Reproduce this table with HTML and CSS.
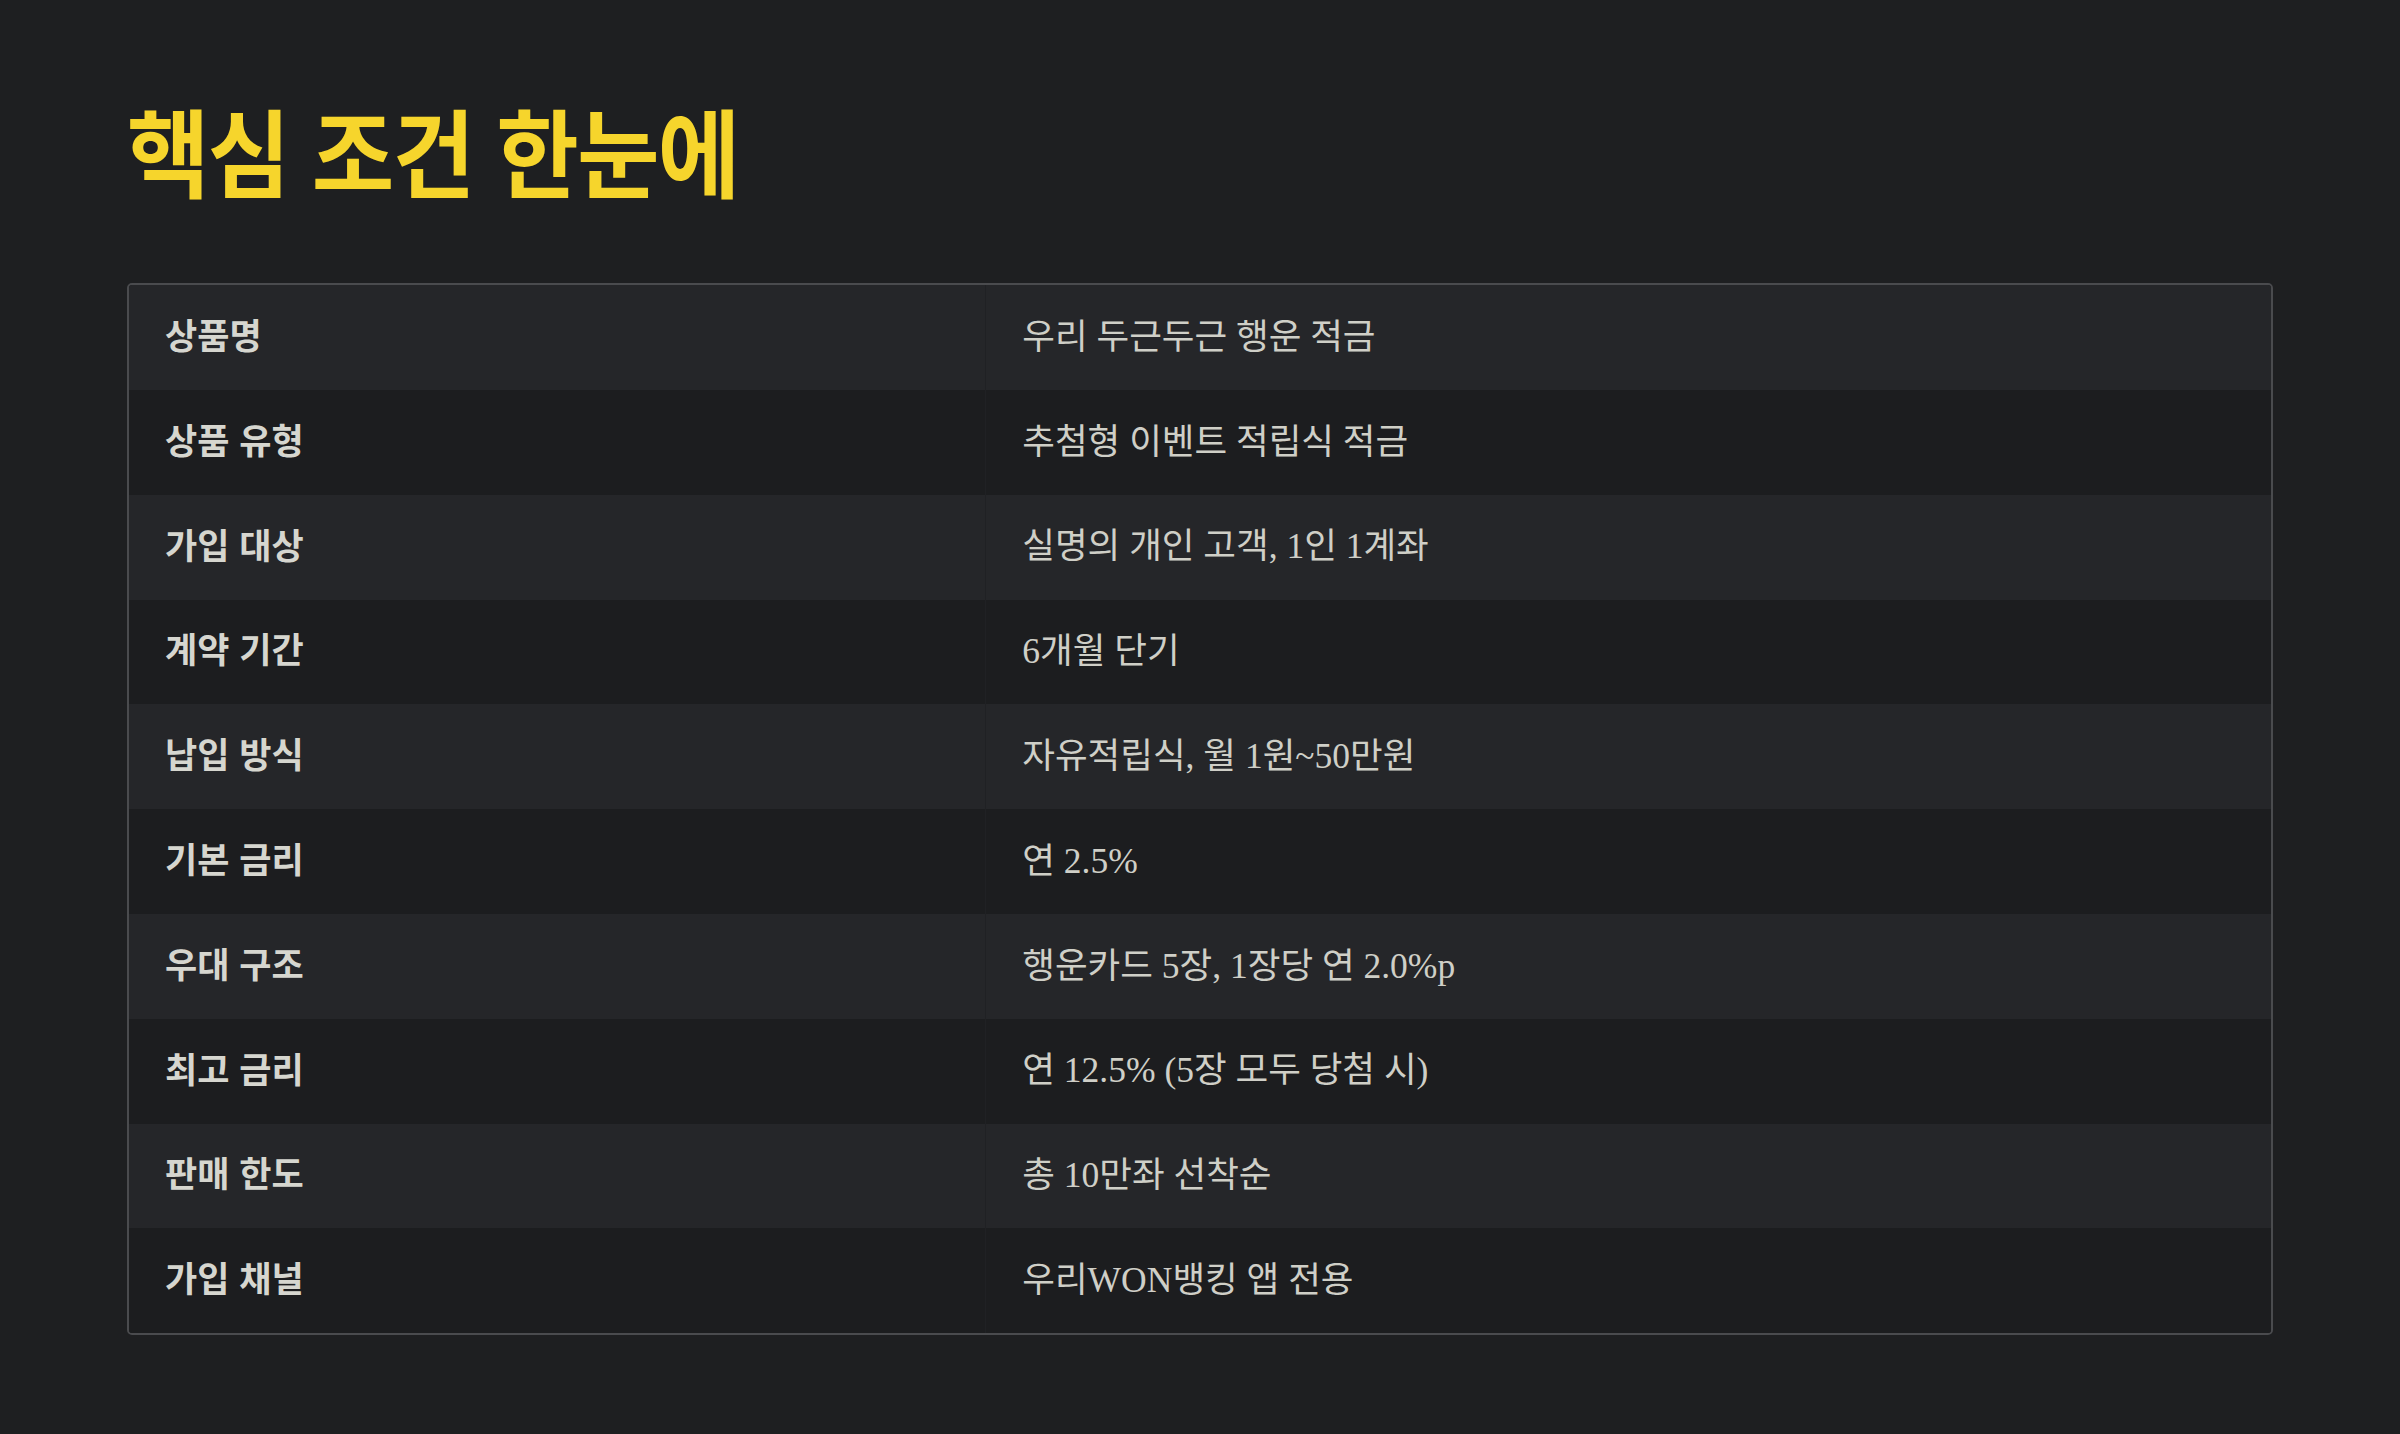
FILE: index.html
```html
<!DOCTYPE html>
<html lang="ko">
<head>
<meta charset="utf-8">
<title>핵심 조건 한눈에</title>
<link rel="stylesheet" href="styles.css">
</head>
<body>
<main class="page">
  <h1 class="title"><span class="title-text">핵심 조건 한눈에</span></h1>
  <div class="table-wrap">
    <table class="terms">
      <tbody>
        <tr><th>상품명</th><td>우리 두근두근 행운 적금</td></tr>
        <tr><th>상품 유형</th><td>추첨형 이벤트 적립식 적금</td></tr>
        <tr><th>가입 대상</th><td>실명의 개인 고객, 1인 1계좌</td></tr>
        <tr><th>계약 기간</th><td>6개월 단기</td></tr>
        <tr><th>납입 방식</th><td>자유적립식, 월 1원~50만원</td></tr>
        <tr><th>기본 금리</th><td>연 2.5%</td></tr>
        <tr><th>우대 구조</th><td>행운카드 5장, 1장당 연 2.0%p</td></tr>
        <tr><th>최고 금리</th><td>연 12.5% (5장 모두 당첨 시)</td></tr>
        <tr><th>판매 한도</th><td>총 10만좌 선착순</td></tr>
        <tr><th>가입 채널</th><td>우리WON뱅킹 앱 전용</td></tr>
      </tbody>
    </table>
  </div>
</main>
</body>
</html>
```

FILE: styles.css
```css
html, body {
  margin: 0;
  padding: 0;
  background: #1e1f21;
}

.page {
  box-sizing: border-box;
  width: 2400px;
  height: 1434px;
  padding: 91px 127px 0 127px;
  display: flex;
  flex-direction: column;
  font-family: "Noto Sans CJK KR", "Noto Sans", sans-serif;
}

.title {
  margin: 0 0 77px 0;
  font-size: 96px;
  line-height: 1.2;
  font-weight: 700;
  color: #f6d52c;
  letter-spacing: -2px;
}

.title-text {
  display: inline-block;
  transform: scaleX(0.935);
  transform-origin: left center;
}

.table-wrap {
  border: 2px solid #4a4b4e;
  border-radius: 5px;
  overflow: hidden;
}

.terms {
  width: 100%;
  border-collapse: collapse;
  table-layout: fixed;
}

.terms tr {
  height: 104.8px;
}

.terms tr:nth-child(odd) {
  background: #252629;
}

.terms tr:nth-child(even) {
  background: #1c1d1f;
}

.terms th,
.terms td {
  padding: 0 36px;
  vertical-align: middle;
  text-align: left;
  line-height: 1.4;
}

.terms th {
  width: 40%;
  box-sizing: border-box;
  padding-bottom: 8px;
  font-size: 35px;
  font-weight: 700;
  color: #d6d6cf;
  border-right: 1px solid #202124;
}

.terms td {
  font-family: "Liberation Serif", "Noto Sans CJK KR", serif;
  font-size: 35.5px;
  font-weight: 400;
  color: #cfcfc7;
}
```
